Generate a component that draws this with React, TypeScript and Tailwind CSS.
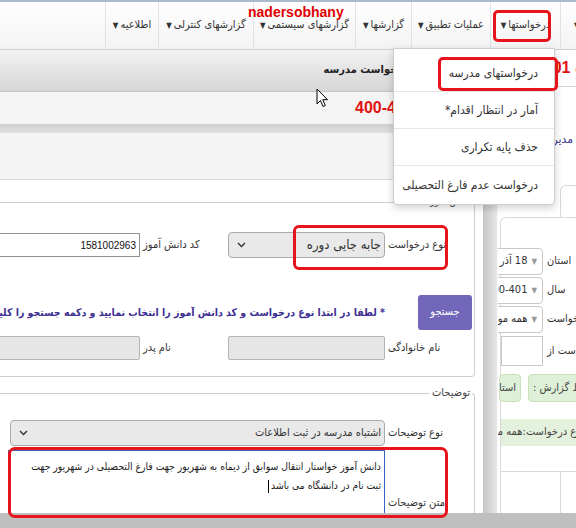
import React from "react";

function Chevron() {
  return (
    <svg width="9" height="6" viewBox="0 0 9 6" className="shrink-0">
      <path d="M1 1 L4.5 4.6 L8 1" fill="none" stroke="#333" strokeWidth="1.4" />
    </svg>
  );
}

function NavItem({ label, cls }: { label: string; cls: string }) {
  return (
    <div className={`h-full flex items-center justify-center gap-[2px] border-l border-[#e2e2e2] shrink-0 ${cls}`}>
      <span className="whitespace-nowrap">{label}</span>
      <span className="text-[8px] leading-none">▼</span>
    </div>
  );
}

function GraySelect({ text, cls, tcls }: { text: string; cls: string; tcls: string }) {
  return (
    <div className={`h-[26px] shrink-0 rounded-[4px] border border-[#aaaaaa] bg-[#e9e9e9] flex items-center justify-between pr-[3px] pl-[8px] ${cls}`}>
      <span className={`whitespace-nowrap ${tcls}`}>{text}</span>
      <Chevron />
    </div>
  );
}

function Dialog() {
  return (
    <div className="w-[483px] shrink-0 flex flex-col overflow-hidden bg-white">
      <div dir="rtl" className="h-[42px] shrink-0 bg-gradient-to-b from-[#f3f3f3] to-[#d6d6d6] border-b border-[#c2c2c2] flex items-center pr-[75px]">
        <span className="font-bold text-[11px] text-[#222] whitespace-nowrap">درخواست مدرسه</span>
      </div>
      <div className="h-[32px] shrink-0 bg-[#f5f5f5] flex items-center pl-[355px]">
        <span className="font-['Liberation_Sans',sans-serif] font-bold text-[16px] text-[#e31212] whitespace-nowrap">400-401</span>
      </div>
      <div className="h-[9px] shrink-0 bg-gradient-to-b from-[#d0d0d0] to-[#e0e0e0]" />
      <div className="h-[47px] shrink-0 bg-[#f4f4f4] border-b border-[#dadada]" />
      <div className="h-[22px] shrink-0 bg-white" />
      <div dir="rtl" className="flex-1 pr-[8px]">
        {/* fieldset 1 */}
        <div className="relative h-[175px] -ml-[10px] border-t border-r border-b border-[#cfcfcf] rounded-br-[4px]">
          <span className="absolute -top-[8px] right-[2px] bg-white px-[2px] text-[10px] text-[#444] leading-[14px]">دانش آموز</span>
          <div className="flex items-center mt-[29px] h-[26px]">
            <div className="w-[89px] shrink-0 flex justify-end pl-[3px]">نوع درخواست</div>
            <GraySelect text="جابه جایی دوره" cls="w-[157px]" tcls="text-[13px]" />
            <div className="w-[88px] shrink-0 flex justify-end pl-[3px] whitespace-nowrap">کد دانش آموز</div>
            <div className="w-[160px] shrink-0 h-[24px] border border-[#8f8f8f] bg-white flex items-center pr-[3px] font-['Liberation_Sans',sans-serif] text-[10px] text-[#111]">1581002963</div>
          </div>
          <div className="flex items-center mt-[37px] h-[35px]">
            <div className="w-[89px] shrink-0 flex justify-start pr-[2px]">
              <div className="w-[54px] h-[35px] bg-[#7166b9] rounded-[3px] text-white flex items-center justify-center">جستجو</div>
            </div>
            <div className="whitespace-nowrap font-bold text-[10.5px] text-[#3d3093]">* لطفا در ابتدا نوع درخواست و کد دانش آموز را انتخاب نمایید و دکمه جستجو را کلیک کنید</div>
          </div>
          <div className="flex items-center mt-[6px] h-[24px]">
            <div className="w-[89px] shrink-0 flex justify-end pl-[3px] whitespace-nowrap">نام خانوادگی</div>
            <div className="w-[157px] shrink-0 h-[24px] rounded-[2px] border border-[#b4b4b4] bg-[#e6e6e6]" />
            <div className="w-[88px] shrink-0 flex justify-end pl-[3px] whitespace-nowrap">نام پدر</div>
            <div className="w-[160px] shrink-0 h-[24px] rounded-[2px] border border-[#b4b4b4] bg-[#e6e6e6]" />
          </div>
        </div>
        {/* fieldset 2 */}
        <div className="relative mt-[16px] h-[140px] -ml-[10px] border-t border-r border-[#cfcfcf] rounded-tr-[4px]">
          <span className="absolute -top-[8px] right-[2px] bg-white px-[2px] text-[11px] text-[#444] leading-[14px]">توضیحات</span>
          <div className="flex items-center mt-[26px] h-[26px]">
            <div className="w-[89px] shrink-0 flex justify-end pl-[3px] whitespace-nowrap">نوع توضیحات</div>
            <GraySelect text="اشتباه مدرسه در ثبت اطلاعات" cls="w-[375px]" tcls="text-[11px]" />
          </div>
          <div className="flex items-stretch mt-[4px] h-[66px]">
            <div className="w-[89px] shrink-0 flex items-end justify-end pl-[3px] pb-[5px] whitespace-nowrap">متن توضیحات</div>
            <div className="w-[377px] shrink-0 border border-[#3b63c6] bg-white pt-[6px] pr-[3px] leading-[19px] text-[10.3px] text-[#222] whitespace-nowrap overflow-hidden">
              <div>دانش آموز خواستار انتقال سوابق از دیماه به شهریور جهت فارغ التحصیلی در شهریور جهت</div>
              <div>
                ثبت نام در دانشگاه می باشد
                <span className="inline-block w-[1px] h-[13px] bg-black align-middle mr-[2px]" />
              </div>
            </div>
          </div>
        </div>
      </div>
    </div>
  );
}

function RSelect({ text }: { text: string }) {
  return (
    <div className="w-[52px] h-[27px] shrink-0 rounded-[4px] border border-[#c8c8c8] bg-white flex items-center gap-[4px] pr-[5px] overflow-hidden">
      <span className="text-[8px] text-[#999]">▼</span>
      <span className="whitespace-nowrap">{text}</span>
    </div>
  );
}

function RLabel({ text }: { text: string }) {
  return <div className="w-[33px] shrink-0 flex justify-end pl-[4px] whitespace-nowrap">{text}</div>;
}

function RightPage() {
  return (
    <div className="flex-1 flex flex-col overflow-hidden bg-white">
      <div className="h-[37px] shrink-0 border-b border-[#d2d2d2] flex items-center -ml-[4px] whitespace-nowrap">
        <span className="font-['Liberation_Sans',sans-serif] font-bold text-[16px] text-[#e31212]">1400-1401 <span dir="rtl">انتخاب</span></span>
      </div>
      <div dir="rtl" className="h-[98px] shrink-0 flex items-center pt-[6px] -mr-[23px] whitespace-nowrap">
        <span className="text-[12px] text-[#3b3591]">کاربر مدیریت درخواستها</span>
      </div>
      <div className="h-[32px] shrink-0 ml-[62px] border-t border-l border-[#d8d8d8] rounded-tl-[6px]" />
      <div dir="rtl" className="flex-1 ml-[2px] border-t border-l border-[#d8d8d8] rounded-tl-[6px] flex flex-col">
        <div className="flex items-center mt-[30px]">
          <RLabel text="استان" />
          <RSelect text="18 آذر" />
        </div>
        <div className="flex items-center mt-[2px]">
          <RLabel text="سال" />
          <RSelect text="1400-401" />
        </div>
        <div className="flex items-center mt-[2px]">
          <RLabel text="نوع درخواست" />
          <RSelect text="همه موارد" />
        </div>
        <div className="flex items-center mt-[3px]">
          <RLabel text="درخواست از" />
          <div className="w-[42px] h-[30px] shrink-0 border border-[#c8c8c8] bg-white" />
        </div>
        <div className="flex items-center gap-[7px] mt-[8px] h-[28px]">
          <div className="w-[56px] -mr-[8px] h-[28px] shrink-0 rounded-[4px] border border-[#c9e0b9] bg-[#dff0d8] flex items-center justify-end pl-[4px] whitespace-nowrap text-[#444]">شرایط گزارش :</div>
          <div className="w-[22px] h-[28px] shrink-0 rounded-[4px] border border-[#c9e0b9] bg-[#dff0d8] flex items-center pr-[4px] overflow-hidden whitespace-nowrap text-[#444]">استان</div>
        </div>
        <div className="h-[27px] mt-[17px] bg-[#e4f1dc] flex items-center -mr-[8px] whitespace-nowrap text-[#444]">نوع درخواست:همه مدارس</div>
        <div className="h-[26px] border-b border-[#d8d8d8]" />
        <div className="flex-1 flex">
          <div className="w-[16px] border-l border-[#d8d8d8]" />
        </div>
      </div>
    </div>
  );
}

export default function App() {
  return (
    <div className="relative w-[576px] h-[528px] overflow-hidden bg-white font-['DejaVu_Sans_Condensed','DejaVu_Sans',sans-serif] text-[11px] text-[#333]">
      <div dir="rtl" className="h-[50px] border-t-2 border-t-[#a9bacd] border-b border-b-[#cfcfcf] bg-gradient-to-b from-[#ffffff] to-[#f3f3f3] flex">
        <NavItem label="امور آموزشی" cls="w-[90px] -mr-[74px]" />
        <NavItem label="درخواستها" cls="w-[70px]" />
        <NavItem label="عملیات تطبیق" cls="w-[79px]" />
        <NavItem label="گزارشها" cls="w-[56px]" />
        <NavItem label="گزارشهای سیستمی" cls="w-[102px]" />
        <NavItem label="گزارشهای کنترلی" cls="w-[95px]" />
        <NavItem label="اطلاعیه" cls="w-[53px]" />
      </div>
      <div className="flex h-[463px]">
        <Dialog />
        <div className="w-[15px] shrink-0 bg-gradient-to-r from-[#c6c6c6] to-[#e8e8e8] border-r border-[#f8f8f8]" />
        <RightPage />
      </div>
      <div className="h-[15px] bg-[#bfbfbf]" />

      {/* watermark */}
      <div className="absolute left-[248px] top-[4px] font-['Liberation_Sans',sans-serif] font-bold text-[14px] text-[#e00000] leading-[16px]">nadersobhany</div>

      {/* dropdown menu */}
      <div dir="rtl" className="absolute left-[393px] top-[48px] w-[162px] h-[157px] bg-white border border-[#cdcdcd] rounded-b-[4px] shadow-[0_3px_8px_rgba(0,0,0,0.18)] pt-[6px] text-[12px] text-[#333]">
        <div className="h-[37px] border-b border-[#e6e6e6] flex items-center pr-[16px] whitespace-nowrap">درخواستهای مدرسه</div>
        <div className="h-[37px] border-b border-[#e6e6e6] flex items-center pr-[16px] whitespace-nowrap">آمار در انتظار اقدام*</div>
        <div className="h-[37px] border-b border-[#e6e6e6] flex items-center pr-[16px] whitespace-nowrap">حذف پایه تکراری</div>
        <div className="h-[38px] flex items-center pr-[16px] whitespace-nowrap">درخواست عدم فارغ التحصیلی</div>
      </div>

      {/* mouse cursor */}
      <svg className="absolute left-[316px] top-[88px]" width="13" height="20" viewBox="0 0 13 20">
        <path d="M1 1 L1 16 L4.5 12.5 L7 18.5 L9.3 17.5 L6.8 11.7 L11.5 11.7 Z" fill="#fff" stroke="#000" strokeWidth="1" strokeLinejoin="round" />
      </svg>

      {/* red annotation boxes */}
      <div className="absolute left-[493px] top-[10px] w-[58px] h-[32px] border-[3px] border-[#e8141b] rounded-[5px]" />
      <div className="absolute left-[438px] top-[57px] w-[120px] h-[34px] border-[3px] border-[#e8141b] rounded-[5px]" />
      <div className="absolute left-[293px] top-[225px] w-[155px] h-[45px] border-[3px] border-[#e8141b] rounded-[6px]" />
      <div className="absolute left-[8px] top-[447px] w-[440px] h-[71px] border-[3px] border-[#e8141b] rounded-[7px]" />
    </div>
  );
}
